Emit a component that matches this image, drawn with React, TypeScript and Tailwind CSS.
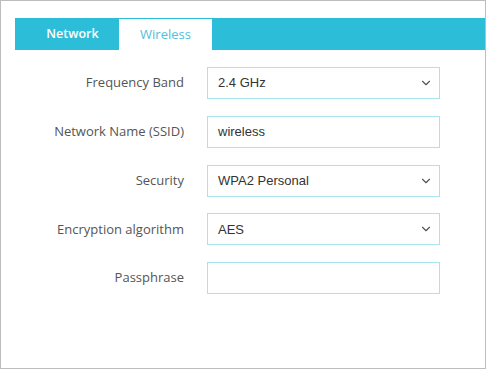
import { ChevronDown } from "lucide-react";

const rows: { label: string; value: string; select: boolean }[] = [
  { label: "Frequency Band", value: "2.4 GHz", select: true },
  { label: "Network Name (SSID)", value: "wireless", select: false },
  { label: "Security", value: "WPA2 Personal", select: true },
  { label: "Encryption algorithm", value: "AES", select: true },
  { label: "Passphrase", value: "", select: false },
];

export default function App() {
  return (
    <div className="w-[486px] h-[369px] border border-[#bdbdbd] bg-white font-['Open_Sans',sans-serif]">
      {/* tabs */}
      <div className="ml-[14px] mt-[17px] h-[32px] bg-[#2cbed8] flex">
        <div className="w-[104px] pl-[11px] flex items-center justify-center text-white text-[12.5px] font-semibold">
          Network
        </div>
        <div className="w-[93px] bg-white border-t border-[#2cbed8] flex items-center justify-center text-[#4fc0da] text-[13px]">
          Wireless
        </div>
      </div>

      {/* form */}
      <div className="mt-[17px] flex flex-col gap-[16.75px]">
        {rows.map((r) => (
          <div key={r.label} className="flex items-center h-[32px]">
            <div className="w-[183px] text-right text-[13px] text-[#555]">{r.label}</div>
            <div className="ml-[23px] w-[233px] h-[32px] border border-[#a9e3ee] flex items-center justify-between pl-[10px] pr-[6px] font-['Liberation_Sans',Arial,sans-serif] text-[13px] text-[#333]">
              <span>{r.value}</span>
              {r.select && <ChevronDown className="w-[14px] h-[14px] text-[#555]" strokeWidth={2} />}
            </div>
          </div>
        ))}
      </div>
    </div>
  );
}
